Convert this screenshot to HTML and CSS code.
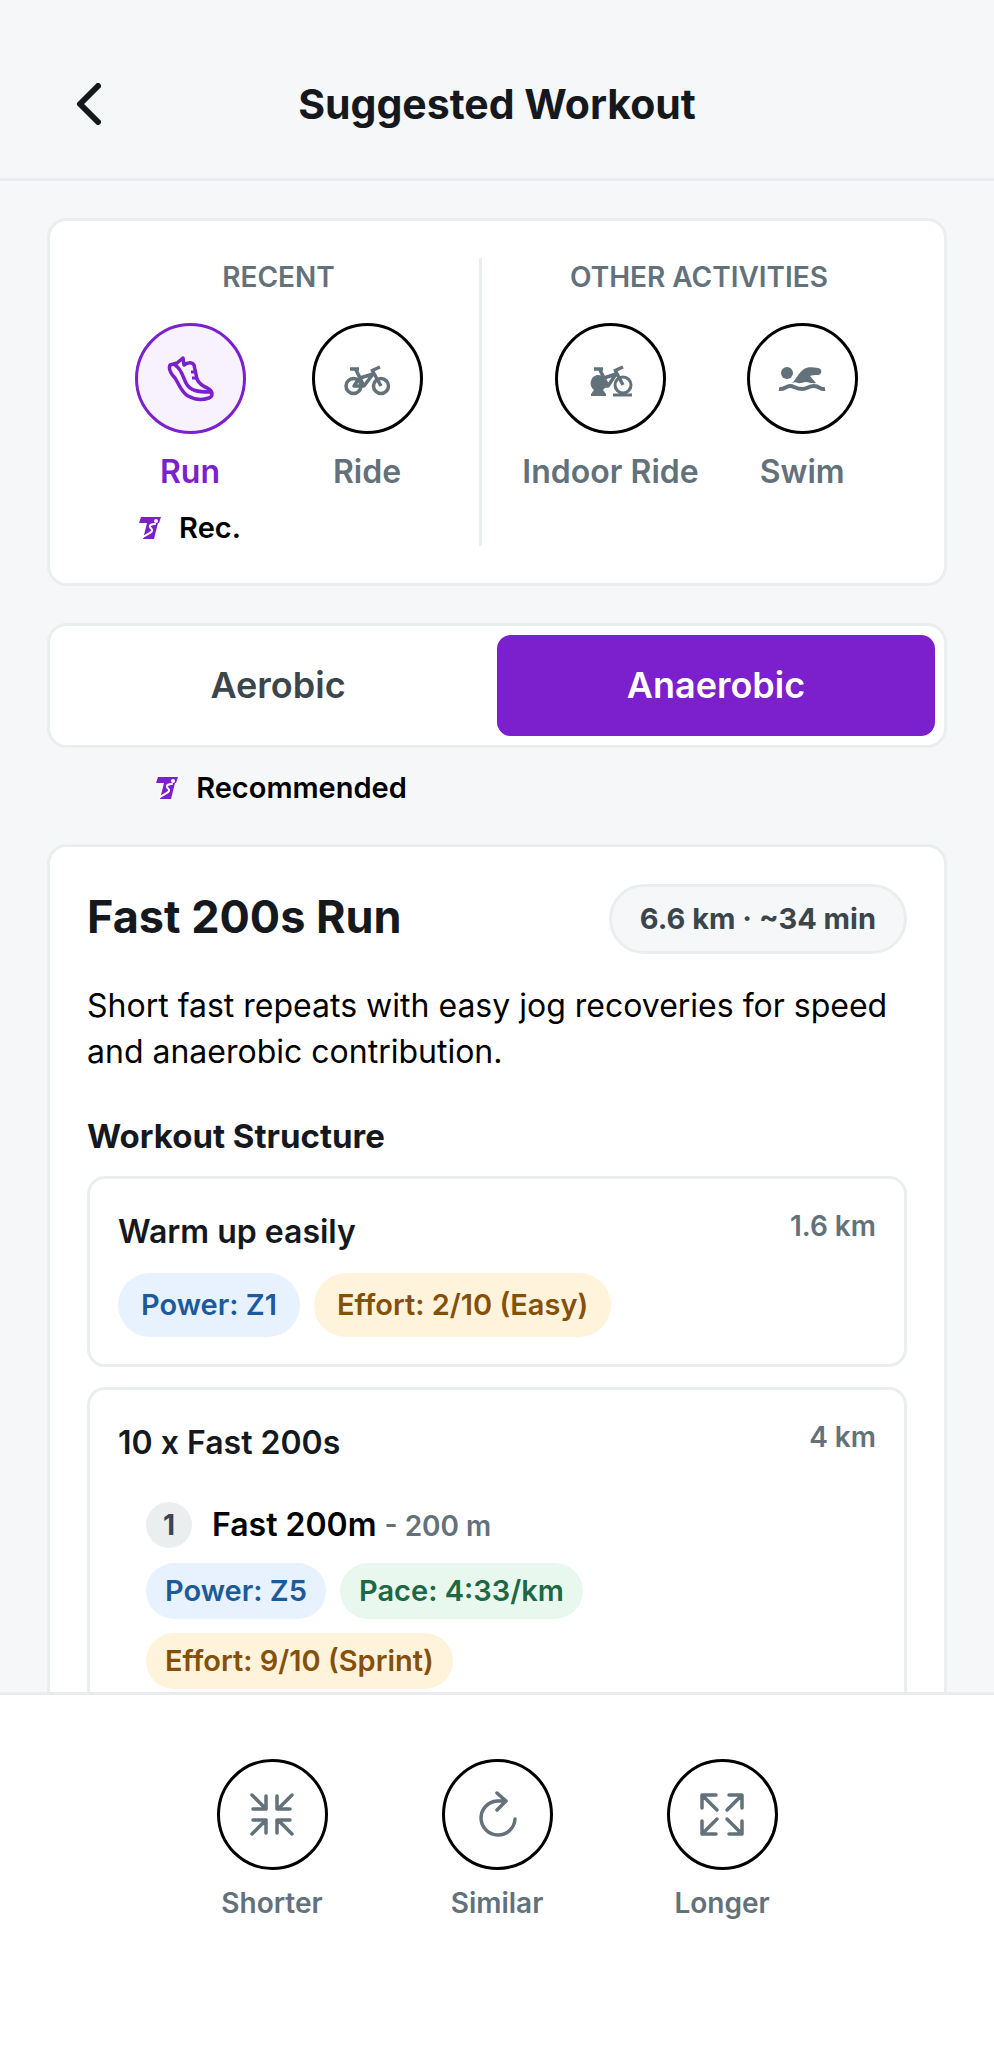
FILE: index.html
```html
<!DOCTYPE html>
<html lang="en">
<head>
<meta charset="utf-8">
<meta name="viewport" content="width=device-width, initial-scale=1">
<title>Suggested Workout</title>
<link rel="stylesheet" href="styles.css">
</head>
<body>
<svg class="defs" aria-hidden="true">
  <symbol id="mark" viewBox="0 0 22 22">
    <path fill="#7c1fcd" d="M2 0h20l-2 6h-1l-4 16H4l4-16H0z"/>
    <circle cx="17" cy="4" r="2" fill="#fff"/>
    <path d="M16 7c-3 0-6 1-5 3s3 2 2 4-3 2-9 6" fill="none" stroke="#fff" stroke-width="2" stroke-linecap="round"/>
  </symbol>
</svg>
<div class="app">
  <header class="header">
    <button class="back" aria-label="Back">
      <svg viewBox="0 0 26 42" width="26" height="42"><path d="M23 3 L5 21 L23 39" fill="none" stroke="#15191d" stroke-width="6" stroke-linecap="round" stroke-linejoin="round"/></svg>
    </button>
    <h1 class="title">Suggested Workout</h1>
  </header>

  <main class="content">
    <section class="card activities">
      <div class="group recent">
        <h2 class="group-title">RECENT</h2>
        <div class="items">
          <div class="item">
            <button class="activity active">
              <span class="circle">
                <svg viewBox="0 0 48 48" width="48" height="48" fill="none" stroke="#7c1fcd" stroke-width="3.5" stroke-linejoin="round" stroke-linecap="round"><path d="M4 10C2 15 5 19 9 23C12 27 15 37 22 41C29 45 37 45 43 43C47 41 47 37 43 34C37 31 33 29 31 24L28 10C26 7 22 7 18 10L17 3L11 8Z"/><path d="M9 10C16 14 17 23 20 28C24 36 32 37 44 37"/><path d="M31 17h-6M32 23h-6" stroke-width="3" stroke-linecap="butt"/></svg>
              </span>
              <span class="label">Run</span>
            </button>
            <span class="rec"><svg width="22" height="22" aria-hidden="true"><use href="#mark"/></svg>Rec.</span>
          </div>
          <div class="item">
            <button class="activity">
              <span class="circle">
                <svg viewBox="0 0 48 48" width="48" height="48" fill="none" stroke="#63717a" stroke-width="3.5"><circle cx="10.500" cy="31" r="7.500"/><circle cx="38" cy="31" r="7.500"/><path d="M7 14h9M13 15l8 16M17 22l-6 9h10l9-12-13 4M29 15l9 16" stroke-linejoin="round"/><path d="M28 16l9-4"/></svg>
              </span>
              <span class="label">Ride</span>
            </button>
          </div>
        </div>
      </div>
      <div class="group other">
        <h2 class="group-title">OTHER ACTIVITIES</h2>
        <div class="items">
          <div class="item">
            <button class="activity">
              <span class="circle">
                <svg viewBox="0 0 48 48" width="48" height="48" fill="none" stroke="#63717a" stroke-width="3.5"><path fill="#63717a" stroke="none" d="M10 20a8.500 8.500 0 0 1 6 15l3 4v2H4v-2l3-4a8.500 8.500 0 0 1 3-15z"/><circle cx="36" cy="30" r="8" stroke-width="3"/><path d="M26 40h19" stroke-width="3"/><path d="M7 14h9M13 15l8 16M17 22l-6 9h10l8-12-12 4M28 15l8 15" stroke-linejoin="round"/><path d="M27 16l9-4"/></svg>
              </span>
              <span class="label">Indoor Ride</span>
            </button>
          </div>
          <div class="item">
            <button class="activity">
              <span class="circle">
                <svg viewBox="0 0 48 48" width="48" height="48" fill="#63717a"><circle cx="9" cy="18" r="6"/><path d="M14 28c4-3 6-10 12-14 3-2 8-2 14-1 5 1 4 7 0 7-4 0-6 0-8 1l6 7c-4 1-7-1-10-1-4 0-5 2-8 1-2-1-4-1-6 0z"/><path d="M1 34c5 1 7-3 11-3s6 3 12 3 6-3 12-3 6 4 11 3" fill="none" stroke="#63717a" stroke-width="4"/></svg>
              </span>
              <span class="label">Swim</span>
            </button>
          </div>
        </div>
      </div>
    </section>

    <div class="card tabs">
      <button class="tab">Aerobic</button>
      <button class="tab selected">Anaerobic</button>
    </div>
    <div class="tab-note">
      <span class="rec"><svg width="22" height="22" aria-hidden="true"><use href="#mark"/></svg>Recommended</span>
    </div>

    <section class="card workout">
      <div class="workout-head">
        <h2 class="workout-title">Fast 200s Run</h2>
        <span class="summary">6.6 km · ~34 min</span>
      </div>
      <p class="description">Short fast repeats with easy jog recoveries for speed and anaerobic contribution.</p>
      <h3 class="section-title">Workout Structure</h3>
      <div class="step">
        <div class="step-head">
          <h4 class="step-title">Warm up easily</h4>
          <span class="distance">1.6 km</span>
        </div>
        <div class="chips">
          <span class="chip power">Power: Z1</span>
          <span class="chip effort">Effort: 2/10 (Easy)</span>
        </div>
      </div>
      <div class="step">
        <div class="step-head">
          <h4 class="step-title">10 x Fast 200s</h4>
          <span class="distance">4 km</span>
        </div>
        <div class="substep">
          <div class="substep-head">
            <span class="number">1</span>
            <p class="substep-title">Fast 200m <span class="substep-distance">- 200 m</span></p>
          </div>
          <div class="chips small">
            <span class="chip power">Power: Z5</span>
            <span class="chip pace">Pace: 4:33/km</span>
            <span class="chip effort">Effort: 9/10 (Sprint)</span>
          </div>
        </div>
      </div>
    </section>
  </main>

  <footer class="footer">
    <button class="adjust">
      <span class="circle"><svg viewBox="0 0 48 48" width="48" height="48" class="line"><path d="M4 4l14 14M18 5v13H5M44 4L30 18M29 5v13h13M4 43l14-14M5 29h13v13M44 43L30 29M42 29H29v13"/></svg></span>
      <span class="adjust-label">Shorter</span>
    </button>
    <button class="adjust">
      <span class="circle"><svg viewBox="0 0 48 48" width="48" height="48" class="line"><path d="M24 2l9 8-9 9M33 10h-9A17 17 0 1 0 42 28"/></svg></span>
      <span class="adjust-label">Similar</span>
    </button>
    <button class="adjust">
      <span class="circle"><svg viewBox="0 0 48 48" width="48" height="48" class="line"><path d="M4 17V4h14M4 4l15 15M31 4h13v13M44 4L29 19M4 30v13h14M4 43l15-15M44 30v13H31M44 43L29 28"/></svg></span>
      <span class="adjust-label">Longer</span>
    </button>
  </footer>
</div>
</body>
</html>
```
FILE: styles.css
```css
* { box-sizing: border-box; }

body {
  margin: 0;
  background: #f5f7f9;
  color: #000;
  font-family: Inter, "Liberation Sans", sans-serif;
  font-size: 28px;
}

h1, h2, h3, h4, p { margin: 0; }

button {
  padding: 0;
  border: 0;
  background: none;
  color: inherit;
  font: inherit;
  cursor: pointer;
}

svg { display: block; flex: none; }

.defs { position: absolute; width: 0; height: 0; }

.app {
  display: flex;
  flex-direction: column;
  height: 100vh;
}

.header {
  display: grid;
  grid-template-columns: 80px 1fr 80px;
  align-items: center;
  flex: none;
  padding: 77px 48px 47px;
  border-bottom: 3px solid #e9ebee;
}

.back { display: flex; padding: 6px 27px; }

.title {
  font-size: 41px;
  line-height: 54px;
  font-weight: 700;
  text-align: center;
  color: #15191d;
}

.content {
  flex: 1;
  min-height: 0;
  overflow: hidden;
  padding: 37px 47px 0;
}

.card {
  background: #fff;
  border: 3px solid #ebeeef;
  border-radius: 20px;
}

.activities {
  display: flex;
  padding: 37px 28px;
}

.recent { flex: 401 1 0; border-right: 3px solid #ebeeef; }
.other { flex: 434 1 0; }

.group-title {
  padding-top: 1px;
  font-size: 28px;
  line-height: 36px;
  font-weight: 600;
  text-align: center;
  color: #63717a;
}

.items {
  display: flex;
  justify-content: center;
  gap: 30px;
  margin-top: 28px;
}

.item {
  display: flex;
  flex-direction: column;
  align-items: center;
  min-width: 147px;
}

.activity, .adjust {
  display: flex;
  flex-direction: column;
  align-items: center;
  color: #63717a;
}

.circle {
  display: grid;
  place-items: center;
  width: 111px;
  height: 111px;
  border: 3px solid #000;
  border-radius: 50%;
}

.label {
  margin-top: 18px;
  font-size: 32px;
  line-height: 40px;
  font-weight: 600;
}

.active { color: #7c1fcd; }
.active .circle { border-color: #7c1fcd; background: #f8f2ff; }

.rec {
  display: flex;
  align-items: center;
  gap: 18px;
  font-size: 29px;
  line-height: 36px;
  font-weight: 600;
}

.item .rec { margin-top: 18px; }

.tabs {
  display: flex;
  margin-top: 37px;
  padding: 9px;
}

.tab {
  flex: 1;
  padding: 28px 0;
  border-radius: 14px;
  font-size: 36px;
  line-height: 45px;
  font-weight: 600;
  color: #3a464c;
}

.selected { background: #7c1fcd; color: #fff; }

.tab-note {
  display: flex;
  justify-content: center;
  width: 50%;
  padding: 22px 0 38px 19px;
}

.workout { padding: 37px; min-height: 1200px; }

.workout-head {
  display: flex;
  align-items: flex-start;
  justify-content: space-between;
}

.workout-title {
  font-size: 45px;
  line-height: 66px;
  font-weight: 700;
  color: #15191d;
}

.summary {
  padding: 14px 28px;
  border: 3px solid #ebeeef;
  border-radius: 36px;
  background: #f5f7f9;
  font-size: 29px;
  line-height: 36px;
  font-weight: 700;
  color: #3a464c;
}

.description {
  margin-top: 29px;
  font-size: 32px;
  line-height: 46px;
}

.section-title {
  margin-top: 41px;
  font-size: 33px;
  line-height: 40px;
  font-weight: 700;
  color: #15191d;
}

.step {
  margin-top: 20px;
  padding: 29px 28px 27px;
  border: 3px solid #ebeeef;
  border-radius: 18px;
}

.step-head {
  display: flex;
  align-items: flex-start;
  justify-content: space-between;
}

.step-title {
  padding-top: 4px;
  font-size: 32px;
  line-height: 40px;
  font-weight: 600;
  color: #15191d;
}

.distance {
  font-size: 28px;
  line-height: 36px;
  font-weight: 600;
  color: #63717a;
}

.chips {
  display: flex;
  flex-wrap: wrap;
  gap: 14px;
  margin-top: 21px;
}

.chip {
  padding: 14px 23px;
  border-radius: 33px;
  font-size: 29px;
  line-height: 36px;
  font-weight: 600;
}

.power { background: #e8f2ff; color: #1c5a9c; }
.effort { background: #fff3dc; color: #855008; }
.pace { background: #e9f8ef; color: #1e6842; }

.substep { padding: 39px 28px 0; }

.substep-head {
  display: flex;
  align-items: center;
  gap: 20px;
}

.number {
  display: grid;
  place-items: center;
  width: 46px;
  height: 46px;
  border-radius: 50%;
  background: #ebeeef;
  font-size: 28px;
  font-weight: 700;
  color: #3a464c;
}

.substep-title {
  font-size: 32px;
  line-height: 40px;
  font-weight: 600;
}

.substep-distance {
  font-size: 28px;
  color: #63717a;
}

.small { margin-top: 15px; max-width: 600px; }
.small .chip { padding: 10px 19px; }

.footer {
  display: flex;
  justify-content: center;
  gap: 114px;
  flex: none;
  padding: 64px 48px 127px;
  border-top: 3px solid #e9ebee;
  background: #fff;
}

.adjust { width: 111px; }

.adjust-label {
  margin-top: 15px;
  font-size: 28px;
  line-height: 36px;
  font-weight: 600;
}

.line {
  fill: none;
  stroke: #63717a;
  stroke-width: 3.5;
  stroke-linecap: round;
  stroke-linejoin: round;
}
```
